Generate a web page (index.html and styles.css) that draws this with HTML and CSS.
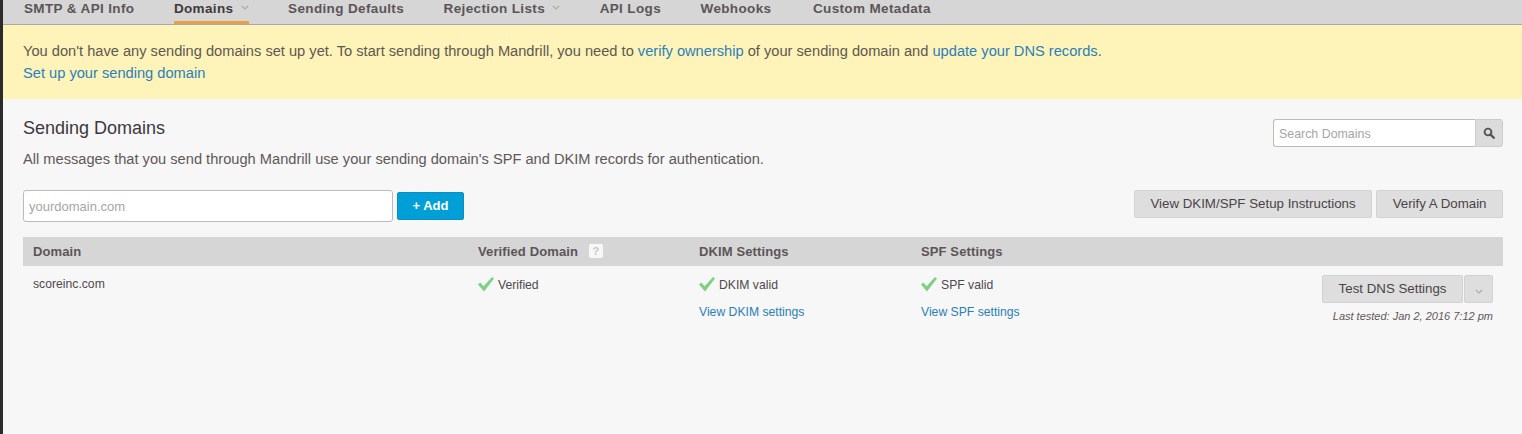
FILE: index.html
```html
<!DOCTYPE html>
<html lang="en">
<head>
<meta charset="utf-8">
<title>Sending Domains</title>
<link rel="stylesheet" href="styles.css">
</head>
<body>
<div class="shell">
  <div class="strip"></div>
  <main class="main">
    <nav class="nav">
      <a class="nav-item">SMTP &amp; API Info</a>
      <a class="nav-item active">Domains <svg class="caret" width="8" height="5" viewBox="0 0 8 5"><path d="M.8.8 4 4 7.2.8" fill="none" stroke="#aaa" stroke-width="1.2"/></svg></a>
      <a class="nav-item">Sending Defaults</a>
      <a class="nav-item">Rejection Lists <svg class="caret" width="8" height="5" viewBox="0 0 8 5"><path d="M.8.8 4 4 7.2.8" fill="none" stroke="#aaa" stroke-width="1.2"/></svg></a>
      <a class="nav-item">API Logs</a>
      <a class="nav-item">Webhooks</a>
      <a class="nav-item">Custom Metadata</a>
    </nav>
    <section class="banner">
      <p>You don't have any sending domains set up yet. To start sending through Mandrill, you need to <a>verify ownership</a> of your sending domain and <a>update your DNS records</a>.</p>
      <p><a>Set up your sending domain</a></p>
    </section>
    <section class="content">
      <div class="head">
        <div>
          <h1>Sending Domains</h1>
          <p class="lead">All messages that you send through Mandrill use your sending domain's SPF and DKIM records for authentication.</p>
        </div>
        <div class="search">
          <span class="search-input">Search Domains</span>
          <span class="search-btn"><svg width="12" height="12" viewBox="0 0 12 12"><circle cx="5" cy="5" r="3.4" fill="none" stroke="#555" stroke-width="1.9"/><path d="M7.6 7.6 10.8 10.8" stroke="#555" stroke-width="2.3" stroke-linecap="round"/></svg></span>
        </div>
      </div>
      <div class="actions">
        <div class="add">
          <span class="domain-input">yourdomain.com</span>
          <button class="btn-add">+ Add</button>
        </div>
        <div class="right-btns">
          <button class="btn">View DKIM/SPF Setup Instructions</button>
          <button class="btn">Verify A Domain</button>
        </div>
      </div>
      <div class="table">
        <div class="row thead">
          <div class="c1">Domain</div>
          <div class="c2">Verified Domain <span class="help">?</span></div>
          <div class="c3">DKIM Settings</div>
          <div class="c4">SPF Settings</div>
        </div>
        <div class="row tbody">
          <div class="c1 domain">scoreinc.com</div>
          <div class="c2"><div class="ok"><svg class="check" width="16" height="15" viewBox="0 0 16 15"><path d="M0 7.5 2.2 5.6 5.6 9.3 14 0 16 1.4 6 14.6Z" fill="#7dd184"/></svg>Verified</div></div>
          <div class="c3"><div class="ok"><svg class="check" width="16" height="15" viewBox="0 0 16 15"><path d="M0 7.5 2.2 5.6 5.6 9.3 14 0 16 1.4 6 14.6Z" fill="#7dd184"/></svg>DKIM valid</div><a class="sub">View DKIM settings</a></div>
          <div class="c4"><div class="ok"><svg class="check" width="16" height="15" viewBox="0 0 16 15"><path d="M0 7.5 2.2 5.6 5.6 9.3 14 0 16 1.4 6 14.6Z" fill="#7dd184"/></svg>SPF valid</div><a class="sub">View SPF settings</a></div>
          <div class="c5">
            <div class="split">
              <button class="btn">Test DNS Settings</button>
              <button class="btn btn-caret"><svg width="8" height="5" viewBox="0 0 8 5"><path d="M.8.8 4 4 7.2.8" fill="none" stroke="#aaa" stroke-width="1.1"/></svg></button>
            </div>
            <em class="tested">Last tested: Jan 2, 2016 7:12 pm</em>
          </div>
        </div>
      </div>
    </section>
  </main>
</div>
</body>
</html>
```
FILE: styles.css
```css
* { box-sizing: border-box; }
html, body { margin: 0; height: 100%; overflow: hidden; }
body { font-family: "Liberation Sans", Arial, sans-serif; color: #5a5050; background: #f7f7f7; }
p { margin: 0; }
a { color: #2a80b9; }
button { font-family: inherit; cursor: pointer; }

.shell { display: flex; height: 434px; }
.strip { width: 3px; background: #2b2b2b; flex: none; }
.main { flex: 1; min-width: 0; }

.nav { display: flex; gap: 39.5px; height: 25px; padding-left: 21px; background: #d6d6d6; border-bottom: 1px solid #a8a8a8; }
.nav-item { height: 24px; padding-top: 1px; font-size: 13.5px; line-height: 16px; font-weight: bold; letter-spacing: .36px; color: #5c5558; white-space: nowrap; }
.nav-item:last-child { margin-left: 2px; }
.nav-item.active { color: #40383c; border-bottom: 3px solid #eb9e4a; }
.caret { margin: 0 0 3px 3px; }

.banner { height: 74px; padding: 15px 20px 0; background: #fef3b9; font-size: 14.65px; line-height: 22px; color: #5f5850; }

.content { padding: 0 19px 0 20px; }
.head { display: flex; justify-content: space-between; padding-top: 20px; }
h1 { margin: 0; font-size: 18px; line-height: 18px; font-weight: normal; color: #40383c; }
.lead { margin-top: 13px; font-size: 14.65px; line-height: 18px; color: #5f5858; }
.search { display: flex; width: 230px; height: 28px; }
.search-input { flex: 1; padding-left: 5px; font-size: 12.4px; line-height: 28px; color: #a6a6a6; background: #fff; border: 1px solid #bbb; border-right: 0; border-radius: 3px 0 0 3px; }
.search-btn { display: flex; width: 28px; align-items: center; justify-content: center; background: #dcdcdc; border: 1px solid #ccc; border-radius: 0 3px 3px 0; }

.actions { display: flex; justify-content: space-between; margin-top: 22px; }
.add { display: flex; gap: 4px; }
.domain-input { width: 370px; height: 32px; padding-left: 5px; font-size: 13px; line-height: 32px; color: #a6a6a6; background: #fff; border: 1px solid #bbb; border-radius: 3px; }
.btn-add { width: 67px; height: 28px; margin-top: 2px; padding: 0 0 2px; font-size: 13px; font-weight: bold; color: #fff; background: #00a0d6; border: 1px solid #0a8fc0; border-radius: 2px; }
.right-btns { display: flex; gap: 4px; }
.btn { height: 28px; padding: 0 15.5px 2px; font-size: 13.3px; color: #4a4348; background: #dedede; border: 1px solid #d2d2d2; border-radius: 2px; white-space: nowrap; }

.table { margin-top: 15px; }
.row { display: flex; }
.c1 { width: 455px; padding-left: 10px; flex: none; }
.c2 { width: 221px; flex: none; }
.c3 { width: 222px; flex: none; }
.c4 { width: 200px; flex: none; }
.c5 { flex: 1; display: flex; flex-direction: column; align-items: flex-end; padding-right: 10px; }
.thead { height: 29px; background: #d6d6d6; font-size: 13px; line-height: 29px; font-weight: bold; letter-spacing: .12px; color: #5c5558; }
.help { display: inline-block; width: 14px; height: 14px; margin-left: 7px; font-size: 11px; line-height: 14px; text-align: center; color: #c8c8c8; background: #f7f7f7; border-radius: 2px; vertical-align: 1px; letter-spacing: 0; }
.tbody { padding-top: 9px; font-size: 12.2px; color: #4f484c; }
.domain { padding-top: 2px; line-height: 14px; }
.ok { display: flex; align-items: center; height: 19px; gap: 4px; }
.check { flex: none; }
.sub { display: block; margin-top: 11px; line-height: 14px; }
.split { display: flex; gap: 1px; }
.btn-caret { width: 29px; padding: 0; }
.tested { margin-top: 7px; font-size: 11px; line-height: 13px; color: #5f5858; }
```
